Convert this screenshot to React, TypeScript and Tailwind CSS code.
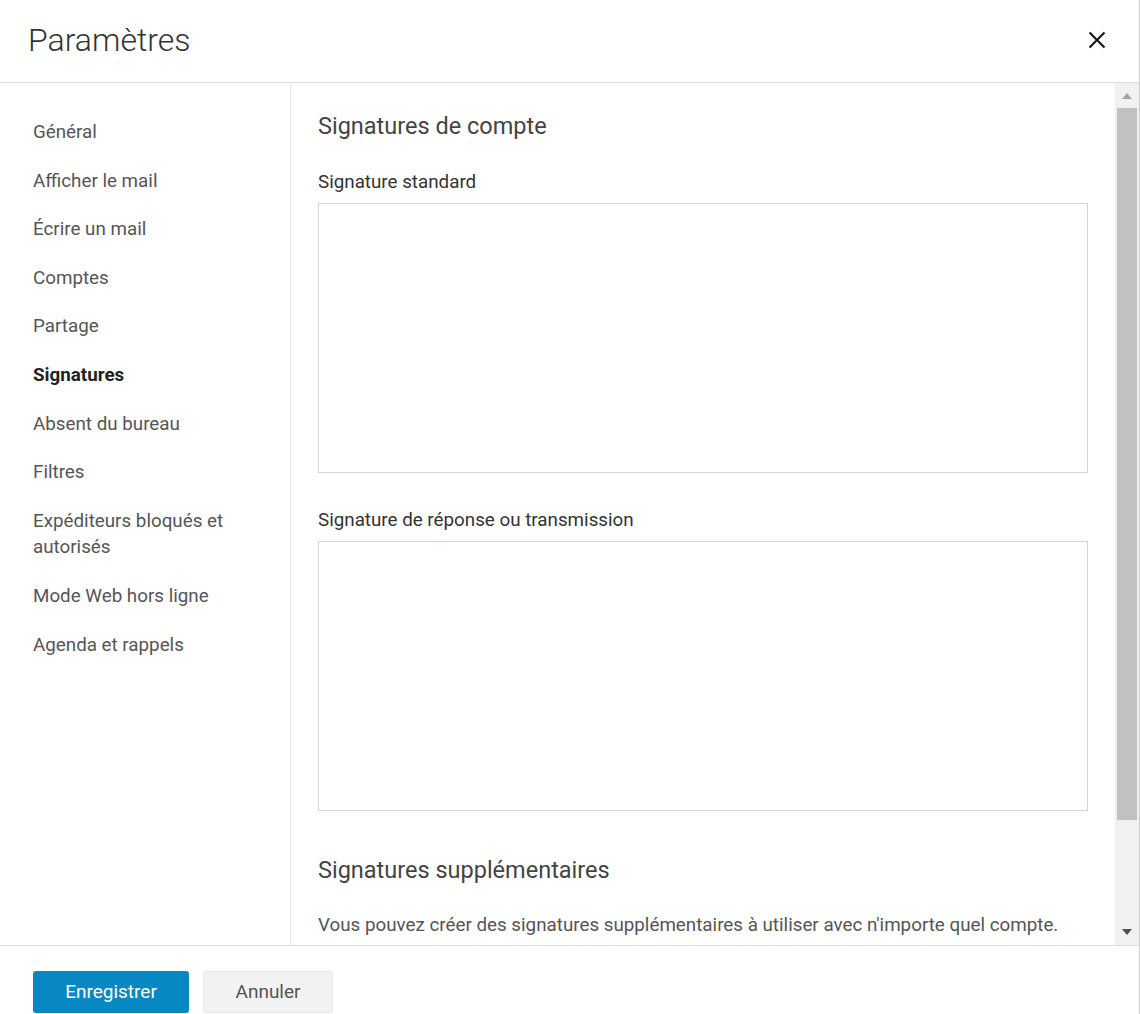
const navItems = [
  "Général",
  "Afficher le mail",
  "Écrire un mail",
  "Comptes",
  "Partage",
  "Signatures",
  "Absent du bureau",
  "Filtres",
  "Expéditeurs bloqués et autorisés",
  "Mode Web hors ligne",
  "Agenda et rappels",
];

function CloseIcon() {
  return (
    <svg width="18" height="18" viewBox="0 0 18 18" fill="none">
      <path d="M1.5 1.5 L16.5 16.5 M16.5 1.5 L1.5 16.5" stroke="#111" strokeWidth="2" />
    </svg>
  );
}

function Scrollbar() {
  return (
    <div className="w-[24px] shrink-0 flex flex-col bg-[#f1f1f1]">
      <div className="h-[25px] flex items-center justify-center">
        <svg width="10" height="6" viewBox="0 0 10 6">
          <path d="M0 6 L5 0 L10 6 Z" fill="#a3a3a3" />
        </svg>
      </div>
      <div className="flex-1">
        <div className="h-[712px] mx-[2px] bg-[#c1c1c1]" />
      </div>
      <div className="h-[27px] flex items-center justify-center">
        <svg width="10" height="6" viewBox="0 0 10 6">
          <path d="M0 0 L5 6 L10 0 Z" fill="#505050" />
        </svg>
      </div>
    </div>
  );
}

export default function App() {
  const active = "Signatures";

  return (
    <div
      className="w-[1140px] h-[1014px] flex flex-col bg-white border-r border-[#cfcfcf] overflow-hidden"
      style={{ fontFamily: "Roboto, 'Liberation Sans', sans-serif" }}
    >
      <header className="h-[83px] shrink-0 flex items-center justify-between border-b border-[#dcdcdc] pl-[28px] pr-[33px]">
        <h1 className="text-[32px] font-light text-[#333] leading-none -mt-[2px]">
          Paramètres
        </h1>
        <button className="-mt-[2px]">
          <CloseIcon />
        </button>
      </header>

      <div className="h-[862px] flex min-h-0">
        <nav className="w-[291px] shrink-0 border-r border-[#e6e6e6] pt-[25px] pl-[33px] pr-[20px]">
          {navItems.map((item) => (
            <div
              key={item}
              className={
                item === active
                  ? "py-[11px] text-[18.8px] leading-[26.6px] font-bold text-[#222]"
                  : "py-[11px] text-[18.8px] leading-[26.6px] text-[#555]"
              }
            >
              {item}
            </div>
          ))}
        </nav>

        <main className="flex-1 min-w-0 overflow-hidden px-[27px] pt-[28px]">
          <h2 className="text-[23.5px] leading-[30px] text-[#444]">
            Signatures de compte
          </h2>
          <label className="block mt-[29px] text-[18.8px] leading-[24px] text-[#333]">
            Signature standard
          </label>
          <div className="mt-[9px] h-[270px] border border-[#d4d4d4]" />
          <label className="block mt-[35px] text-[18.8px] leading-[24px] text-[#333]">
            Signature de réponse ou transmission
          </label>
          <div className="mt-[9px] h-[270px] border border-[#d4d4d4]" />
          <h2 className="mt-[44px] text-[23.5px] leading-[30px] text-[#444]">
            Signatures supplémentaires
          </h2>
          <p className="mt-[28px] text-[18.8px] leading-[24px] text-[#555] whitespace-nowrap">
            Vous pouvez créer des signatures supplémentaires à utiliser avec n'importe quel compte.
          </p>
        </main>

        <Scrollbar />
      </div>

      <footer className="flex-1 border-t border-[#dcdcdc] pl-[33px] pt-[25px] flex gap-[14px] items-start">
        <button className="w-[156px] h-[42px] rounded-[3px] bg-[#0888c2] text-white text-[19px]">
          Enregistrer
        </button>
        <button className="w-[130px] h-[42px] rounded-[3px] bg-[#f2f2f2] border border-[#e6e6e6] text-[#555] text-[19px]">
          Annuler
        </button>
      </footer>
    </div>
  );
}
